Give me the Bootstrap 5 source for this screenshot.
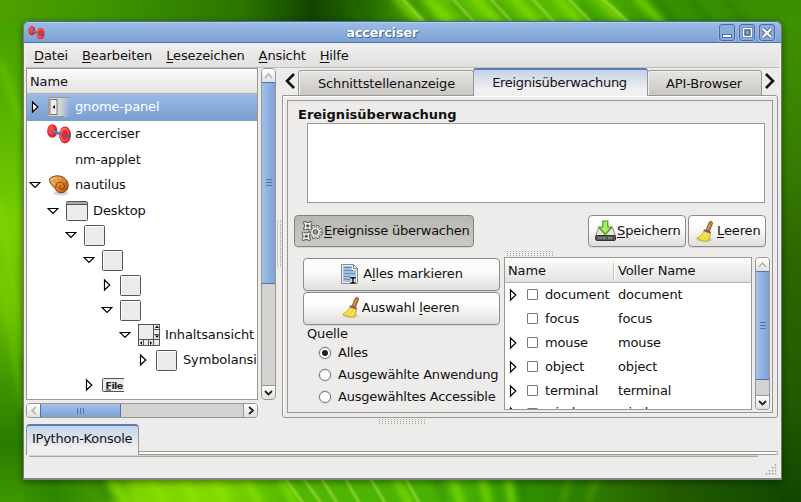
<!DOCTYPE html>
<html lang="de">
<head>
<meta charset="utf-8">
<title>accerciser</title>
<link rel="stylesheet" href="https://cdn.jsdelivr.net/npm/bootstrap@5.3.0/dist/css/bootstrap.min.css">
<style>
*{box-sizing:border-box}
body{width:801px;height:502px;overflow:hidden;background:#2f8400;font-family:"DejaVu Sans",sans-serif;font-size:13px;line-height:16px;color:#111;letter-spacing:-.13px}
svg{display:block;flex:none}
u{text-underline-offset:2px;text-decoration-thickness:1px}
.wallpaper{position:absolute;left:0;top:0}
.desktop{position:relative;padding:21px 19px 22px 23px}
.win{width:759px;height:459px;background:#edeceb;border-left:1px solid #777;border-right:1px solid #777;border-bottom:2px solid #87838a;border-radius:6px 6px 0 0;box-shadow:0 2px 6px 1px rgba(0,25,0,.42);overflow:hidden}
.titlebar{height:22px;margin:0 -1px;padding:1px 6px 0 4px;background:linear-gradient(#9dbce6,#7ba1d3);border:1px solid #46699b;border-bottom-color:#4b74b0;border-radius:6px 6px 0 0;box-shadow:inset 0 1px #b3cbed}
.titlebar .caption{font-weight:bold;color:#fff;letter-spacing:-.3px;text-shadow:1px 1px #456899,-1px 0 #5b80b4}
.wbtn{width:16px;height:17px;border:1px solid #4a6c9c;border-radius:3px;background:#8aaddc;box-shadow:0 0 0 1px #9ab8e0;display:flex;align-items:center;justify-content:center}
.menus{height:25px;padding:5px 0 0 8px;margin:0 2px;background:linear-gradient(#efeeed,#e2e1df);border-bottom:1px solid #bfbebb;gap:14px}
.main{height:356px;padding:0 3px 0 2px}
.tree{width:232px;height:332px;border:1px solid #9a9793;background:#fff;overflow:hidden}
.colhead{background:linear-gradient(#fcfcfc,#e3e2e0);border-bottom:1px solid #b5b2ae}
.tree .colhead{height:25px;padding:5px 0 0 3px}
.node{height:25px;white-space:nowrap;display:flex;align-items:center}
.node .exp{width:12px;margin-right:7px}
.node .ico{width:22px;margin-right:5px}
.h27{height:27px;padding-bottom:1px}.h26{height:26px}
.picked{background:linear-gradient(#9bbae5,#779fd1);color:#fff}
.lv0{padding-left:2px}.lv1{padding-left:20px}.lv2{padding-left:38px}.lv3{padding-left:56px}.lv4{padding-left:74px}.lv5{padding-left:92px}.lv6{padding-left:110px}
.lv2,.lv3,.lv4,.lv5,.lv6{padding-bottom:1px}
.vbar{width:15px;background:#d3d2d0;border:1px solid #9a9793;border-radius:4px;overflow:hidden;display:flex;flex-direction:column}
.hbar{height:15px;width:232px;margin-top:3px;background:#d3d2d0;border:1px solid #9a9793;border-radius:4px;overflow:hidden;display:flex}
.sbtn{background:linear-gradient(#fff,#e2e1df);flex:none;display:flex;align-items:center;justify-content:center}
.vbar .sbtn{height:13px}.hbar .sbtn{width:13px}
.vthumb{margin:0 -1px;border:1px solid #4b74b0;background:linear-gradient(90deg,#a3c1ea,#7ca2d6);flex:none}
.hthumb{margin:-1px 0;border:1px solid #4b74b0;background:linear-gradient(#a3c1ea,#7ca2d6);flex:none}
.vbar .sbtn:last-child{border-top:1px solid #9a9793;margin-top:auto;height:14px}
.hbar .sbtn:last-child{border-left:1px solid #9a9793;margin-left:auto;width:14px}
.vthumb,.hthumb{display:flex;align-items:center;justify-content:center}
.dots{background:conic-gradient(from 0deg at 1px 1px,transparent 0 75%,#a6a39f 0) 0 0/3px 2px}
.book{width:496px;margin-left:6px}
.tabs{height:28px;align-items:flex-end;margin-bottom:-1px;position:relative}
.gtab{text-align:center;border:1px solid #9a9793;border-radius:3px 3px 0 0;height:26px;padding:5px 0 0 1px;background:linear-gradient(#e6e5e3,#c9c7c4);box-shadow:inset 1px 1px #f2f1f0}
.gtab.on{height:28px;border-top:2px solid #5a7ead;border-bottom:0;padding:5px 2px 0 0;background:linear-gradient(#c3d3ea,#f0f0f0 75%);box-shadow:none;letter-spacing:-.3px}
.page{height:323px;border:1px solid #9a9793;border-radius:0 3px 3px 3px;background:#edeceb;box-shadow:inset 1px 1px #fff;padding:4px}
.inner{height:313px;border:1px solid #9a9793;overflow:hidden;padding:7px 0 0}
.heading{font-weight:bold;padding-left:10px;height:15px;line-height:14px;letter-spacing:0}
.logbox{width:458px;height:80px;border:1px solid #9a9793;background:#fff;margin-left:19px}
.gbtn{height:33px;border:1px solid #8f8c88;border-radius:4px;background:linear-gradient(#fff,#fbfbfa 40%,#e0dfdd);display:flex;align-items:center;white-space:nowrap;box-shadow:0 1px #d9d8d6}
.gbtn.down{background:linear-gradient(#b9b7b4,#cbc9c6);border-color:#85827e}
.marks .gbtn{padding-bottom:2px}
.opt{height:22px;display:flex;align-items:center;gap:7px;padding-left:16px;white-space:nowrap;letter-spacing:-.22px}
.rad{width:12px;height:12px;flex:none;border:1px solid #777;border-radius:50%;background:#fff;display:flex;align-items:center;justify-content:center;box-shadow:0 0 0 1px #dcdbd9}
.rad.on::after{content:"";width:6px;height:6px;border-radius:50%;background:#222}
.grid2{width:248px;height:153px;border:1px solid #9a9793;background:#fff;overflow:hidden}
.grid2 .colhead{height:25px;padding:5px 0 0 3px;display:flex}
.c1{width:105px;flex:none}
.c2{border-left:1px solid #c4c2bf;box-shadow:inset 1px 0 #fff;padding-left:4px;height:17px}
.ev{height:24px;display:flex;align-items:center;padding:0 0 1px 2px}
.ev:last-child{padding-bottom:4px}
.ev svg{width:12px;margin-right:8px}
.cbx{width:11px;height:11px;border:1px solid #777;background:#fff;margin-right:7px;border-radius:1px}
.ev .n1{width:73px}
.itab{width:113px;height:31px;border:1px solid #9a9793;border-top:2px solid #5a7ead;border-bottom:0;border-radius:4px 4px 0 0;background:linear-gradient(#c3d3ea,#f0f0f0 75%);padding:5px 0 0 5px;white-space:nowrap;letter-spacing:-.25px}
.rule{height:4px;border:1px solid #9a9793;border-left:0;background:#fff;flex:1;border-radius:0 2px 2px 0}
.line2{height:2px;background:#aaa8a4;margin:0 23px 0 5px;border-top:1px solid #d5d3d1}
</style>
<script src="https://cdn.jsdelivr.net/npm/bootstrap@5.3.0/dist/js/bootstrap.bundle.min.js"></script>
</head>
<body>
<svg class="wallpaper" width="801" height="502" viewBox="0 0 801 502">
 <defs>
  <linearGradient id="gt"><stop offset="0" stop-color="#4ea000"/><stop offset=".12" stop-color="#3f9600"/><stop offset=".3" stop-color="#2b7600"/><stop offset=".39" stop-color="#124400"/><stop offset=".46" stop-color="#256c00"/><stop offset=".55" stop-color="#60c000"/><stop offset=".72" stop-color="#55b800"/><stop offset=".83" stop-color="#349000"/><stop offset="1" stop-color="#3c8d02"/></linearGradient>
  <linearGradient id="gb"><stop offset="0" stop-color="#3f9800"/><stop offset=".07" stop-color="#2e8600"/><stop offset=".13" stop-color="#459a00"/><stop offset=".17" stop-color="#80d400"/><stop offset=".27" stop-color="#84d800"/><stop offset=".36" stop-color="#52b800"/><stop offset=".58" stop-color="#48b006"/><stop offset=".66" stop-color="#2f9000"/><stop offset=".76" stop-color="#2c7400"/><stop offset=".84" stop-color="#235c00"/><stop offset="1" stop-color="#0e4700"/></linearGradient>
  <linearGradient id="gl" x2="0" y2="1"><stop offset="0" stop-color="#46a000"/><stop offset=".2" stop-color="#5ab400"/><stop offset=".42" stop-color="#78cf00"/><stop offset=".6" stop-color="#69bd00"/><stop offset=".75" stop-color="#3d9600"/><stop offset=".88" stop-color="#2a7c00"/><stop offset="1" stop-color="#3d9800"/></linearGradient>
  <linearGradient id="gr" x2="0" y2="1"><stop offset="0" stop-color="#3e9202"/><stop offset=".3" stop-color="#377d02"/><stop offset=".5" stop-color="#2c6700"/><stop offset=".8" stop-color="#215a00"/><stop offset="1" stop-color="#0f4700"/></linearGradient>
  <filter id="b1" x="-20%" y="-50%" width="140%" height="200%"><feGaussianBlur stdDeviation="1"/></filter>
  <filter id="b4" x="-20%" y="-50%" width="140%" height="200%"><feGaussianBlur stdDeviation="3"/></filter>
 </defs>
 <rect width="801" height="250" fill="url(#gt)"/><rect y="250" width="801" height="252" fill="url(#gb)"/>
 <rect y="22" width="24" height="480" fill="url(#gl)"/><rect x="780" y="15" width="21" height="487" fill="url(#gr)"/>
 <g filter="url(#b4)" stroke-width="8" stroke="#8be800" opacity=".65"><path d="M395 -4l28 28M425 -4l26 28M472 -4l28 28M512 -4l26 28M555 -4l26 28M596 -4l28 28M635 -4l28 28M110 478l18 28M150 478l16 28M182 478l16 28M213 478l16 28M245 478l16 28M280 478l16 28M395 478l16 28M452 478l10 28M482 478l7 28M508 478l5 28"/></g>
 <g filter="url(#b4)" stroke-width="6" stroke="#236f00" opacity=".4"><path d="M345 0l20 24M375 0l20 24M412 0l22 24M452 0l22 24M492 0l22 24M578 0l22 24M655 0l22 24M690 0l22 24M725 0l22 24M95 478l14 24M435 478l10 24M520 478l4 24"/></g>
 <g filter="url(#b1)" stroke="#c4ee63" stroke-width="1.8" opacity=".75"><path d="M400 -4l26 28M450 -4l26 28M488 -4l26 28M530 -4l26 28M566 -4l27 28M600 -4l30 28M285 478l20 28M303 478l20 28M321 478l18 28M345 478l16 28M370 478l17 28M405 478l16 28"/></g>
 <path d="M0 200L24 360M0 270L24 410M0 60L24 130" stroke="#8ee000" stroke-width="5" opacity=".4" filter="url(#b4)"/>
 <path d="M598 476L588 502M570 476l-7 26" stroke="#66a800" stroke-width="5" opacity=".6" filter="url(#b4)"/>
</svg>
<svg width="0" height="0" style="position:absolute">
 <defs>
  <linearGradient id="brz" x2="1" y2="1"><stop offset="0" stop-color="#fbd08a"/><stop offset=".5" stop-color="#e38a2c"/><stop offset="1" stop-color="#a8500c"/></linearGradient>
  <symbol id="er" viewBox="0 0 12 14"><path d="M3.500 2v10L8.800 7z" fill="#fff" stroke="#000" stroke-width="1.200"/></symbol>
  <symbol id="ed" viewBox="0 0 12 14"><path d="M1 4.500h10L6 9.500z" fill="#fff" stroke="#000" stroke-width="1.200"/></symbol>
  <symbol id="dumb" viewBox="0 0 24 20"><ellipse cx="5.300" cy="7" rx="5.200" ry="6.800" fill="#e52527"/><ellipse cx="4.300" cy="6" rx="3" ry="4.500" fill="#ee5052"/><ellipse cx="18" cy="11" rx="6" ry="8.500" fill="#de2427"/><ellipse cx="17.300" cy="10.500" rx="4.800" ry="7" fill="#f1686a"/><ellipse cx="18" cy="11" rx="3.600" ry="5" fill="#e12e31"/><path d="M5 7.500l9 2.200M19 11.200l4.500 1" stroke="#42659d" stroke-width="2.600"/><path d="M6 7.300l8 2" stroke="#8badda" stroke-width=".8"/></symbol>
  <symbol id="box" viewBox="0 0 22 22"><rect x=".5" y="1.500" width="20" height="20" rx="1" fill="#ebebeb" stroke="#555" /><path d="M1.500 21V2.500H20" fill="none" stroke="#fff"/></symbol>
  <symbol id="broom" viewBox="0 0 24 24"><ellipse cx="12" cy="21" rx="9" ry="1.800" fill="#000" opacity=".13"/><path d="M16.500 2c1.500-1.800 4-1.200 3.700 1.200l-3.500 9-3.700-1.400z" fill="#b9782b" stroke="#7d4a13" stroke-width=".8"/><path d="M18 3l-3 7" stroke="#e2ab63" stroke-width="1"/><path d="M11 11c-1.600 4-4.500 6.500-8 8.300 3.300 3 8 3.700 13 3.200 1-3 2-6 2-9z" fill="#eed42f" stroke="#b79a08" stroke-width=".7"/><path d="M5.500 19.500l6-6M9 21l3.500-7M12.500 21.500l3-7" stroke="#fbf094"/><path d="M10.800 10.500l7.400 2.800" stroke="#80508c" stroke-width="2"/></symbol>
  <symbol id="cog" viewBox="0 0 10 10"><path d="M.7.700h2.600v.8h3.400V.7h2.600v2.600h-.8v3.400h.8v2.600H6.700v-.8H3.300v.8H.7V6.700h.8V3.300H.7z" fill="#eeeeec" stroke="#555753" stroke-width="1"/><circle cx="5" cy="5" r="1.700" fill="#555753"/></symbol>
 </defs>
</svg>
<div class="desktop">
<div class="win">
 <div class="titlebar d-flex align-items-center">
  <svg width="17" height="13" viewBox="0 0 24 19"><use href="#dumb" width="24" height="20"/></svg>
  <span class="caption flex-fill text-center">accerciser</span>
  <div class="d-flex" style="gap:4px">
   <span class="wbtn"><svg width="10" height="11"><rect x=".5" y="7.500" width="9" height="3" fill="#fff" stroke="#4a6c9c"/></svg></span>
   <span class="wbtn"><svg width="11" height="11"><rect x="1.500" y="1.500" width="8" height="8" fill="#6b90c4" stroke="#4a6c9c" stroke-width="3"/><rect x="1.500" y="1.500" width="8" height="8" fill="none" stroke="#fff" stroke-width="1.500"/><rect x="3.500" y="3.500" width="4" height="4" fill="#8aaddc" stroke="#4a6c9c"/></svg></span>
   <span class="wbtn"><svg width="12" height="12"><path d="M2 2l8 8M10 2l-8 8" stroke="#4a6c9c" stroke-width="4.200"/><path d="M2 2l8 8M10 2l-8 8" stroke="#fff" stroke-width="2.300"/></svg></span>
  </div>
 </div>
 <div class="menus d-flex"><span><u>D</u>atei</span><span><u>B</u>earbeiten</span><span><u>L</u>esezeichen</span><span><u>A</u>nsicht</span><span><u>H</u>ilfe</span></div>
 <div class="main d-flex">
  <div>
   <div class="tree">
    <div class="colhead">Name</div>
    <div class="node h27 lv0 picked"><svg class="exp" height="14"><use href="#er"/></svg><svg class="ico" width="22" height="20"><defs><linearGradient id="fade"><stop offset=".55" stop-color="#d3d7cf"/><stop offset="1" stop-color="#d3d7cf" stop-opacity="0"/></linearGradient></defs><rect width="22" height="20" fill="url(#fade)"/><path d="M22 .5H.5v19H16" fill="none" stroke="#888a85" stroke-width=".8"/><rect x="2" y="2.500" width="7" height="15" fill="#edeeec" stroke="#777"/><path d="M7 8v4L4.500 10z"/></svg><span>gnome-panel</span></div>
    <div class="node h26 lv0"><span class="exp"></span><svg class="ico overflow-visible" height="20"><use href="#dumb" x="-1" y="0" width="24" height="20"/></svg><span>accerciser</span></div>
    <div class="node lv0"><span class="exp"></span><span class="ico"></span><span>nm-applet</span></div>
    <div class="node h26 lv0"><svg class="exp" height="14"><use href="#ed"/></svg><svg class="ico" height="22"><ellipse cx="13" cy="19.500" rx="8" ry="2" fill="#000" opacity=".15"/><path d="M1.500 5C5 1 13 .8 17 4.500c4.500 4 4.300 11-1 13.700-4 1.600-8 0-8.500-3.700C4.500 12.500 1.500 9 1.500 5z" fill="url(#brz)" stroke="#74390c"/><path d="M8 14c-1-4 3-7.500 6.500-5s2 6.500-1 6.300-2.700-3.300-.5-3.500" fill="none" stroke="#7d3e0c" stroke-width="1"/><path d="M9.500 3l1.500 4M15 3.500l-1 3.500M19.500 8.500l-3 1M5 6l4 3" fill="none" stroke="#a05a1c" stroke-width=".5"/></svg><span>nautilus</span></div>
    <div class="node lv1"><svg class="exp" height="14"><use href="#ed"/></svg><svg class="ico" height="20"><rect x=".5" y=".5" width="21" height="19" rx="1" fill="#ebebeb" stroke="#555"/><path d="M1 1h20v2H1z" fill="#aaa"/><path d="M0 3.500h22" stroke="#555"/></svg><span>Desktop</span></div>
    <div class="node lv2"><svg class="exp" height="14"><use href="#ed"/></svg><svg class="ico" height="22"><use href="#box"/></svg></div>
    <div class="node lv3"><svg class="exp" height="14"><use href="#ed"/></svg><svg class="ico" height="22"><use href="#box"/></svg></div>
    <div class="node lv4"><svg class="exp" height="14"><use href="#er"/></svg><svg class="ico" height="22"><use href="#box"/></svg></div>
    <div class="node lv4"><svg class="exp" height="14"><use href="#ed"/></svg><svg class="ico" height="22"><use href="#box"/></svg></div>
    <div class="node lv5"><svg class="exp" height="14"><use href="#ed"/></svg><svg class="ico" height="22"><rect x=".5" y=".5" width="21" height="21" fill="#ebebeb" stroke="#555"/><path d="M15.500 0v22M0 15.500h22M16 5.500h6M16 10.500h6M5.500 16v6M10.500 16v6" stroke="#555"/><path d="M19 1.500l2 2.500h-4zM19 14l2-2.500h-4zM2 19l2-2v4zM14 19l-2-2v4z"/></svg><span>Inhaltsansicht</span></div>
    <div class="node lv6"><svg class="exp" height="14"><use href="#er"/></svg><svg class="ico" height="22"><use href="#box"/></svg><span>Symbolansicht</span></div>
    <div class="node lv3"><svg class="exp" height="14"><use href="#er"/></svg><svg class="ico" height="14"><path d="M22 .5H1.500q-1 0-1 1v11q0 1 1 1H22" fill="#ebebeb" stroke="#555"/><text x="3.500" y="10.500" font-size="9.500" font-weight="bold" textLength="17.500" fill="#222">File</text><path d="M4 12h5" stroke="#222"/></svg></div>
   </div>
   <div class="hbar">
    <span class="sbtn"><svg width="8" height="9"><path d="M6 1L2 4.500 6 8" fill="none" stroke="#aaa" stroke-width="1.500"/></svg></span>
    <span class="hthumb" style="width:81px"><svg width="8" height="6"><path d="M.5 0v6M3.500 0v6M6.500 0v6" stroke="#4b74b0"/></svg></span>
    <span class="sbtn"><svg width="8" height="9"><path d="M2 1l4 3.500L2 8" fill="none" stroke="#222" stroke-width="1.800"/></svg></span>
   </div>
  </div>
  <div class="vbar" style="height:332px;margin-left:3px">
   <span class="sbtn"><svg width="9" height="8"><path d="M1 6l3.500-4L8 6" fill="none" stroke="#aaa" stroke-width="1.200"/></svg></span>
   <span class="vthumb" style="height:202px"><svg width="6" height="8"><path d="M0 .5h6M0 3.500h6M0 6.500h6" stroke="#4b74b0"/></svg></span>
   <span class="sbtn"><svg width="9" height="8"><path d="M1 2l3.500 3.500L8 2" fill="none" stroke="#222" stroke-width="1.800"/></svg></span>
  </div>
  <div style="width:6px;padding:152px 0 0 1px;margin-right:-6px"><div class="dots" style="width:5px;height:47px"></div></div>
  <div class="book">
   <div class="tabs d-flex">
    <svg width="16" height="28"><path d="M12 6L5 13l7 7" fill="none" stroke="#111" stroke-width="2.600"/></svg>
    <div class="gtab" style="width:176px">Schnittstellenanzeige</div>
    <div class="gtab on" style="width:175px;margin-left:-1px">Ereignisüberwachung</div>
    <div class="gtab" style="width:115px;margin-left:-1px;padding-right:2px">API-Browser</div>
    <svg width="16" height="28"><path d="M4 6l7 7-7 7" fill="none" stroke="#111" stroke-width="2.600"/></svg>
   </div>
   <div class="page"><div class="inner">
    <div class="heading">Ereignisüberwachung</div>
    <div class="logbox"></div>
    <div class="d-flex" style="padding:12px 6px 0 6px">
     <div class="gbtn down" style="width:180px;height:32px;padding-left:6px"><svg width="22" height="22"><g fill="none"><circle cx="14.500" cy="12" r="5.300" stroke="#555753" stroke-width="4" stroke-dasharray="2.800 1.362"/><circle cx="14.500" cy="12" r="5.200" stroke="#e4e4e2" stroke-width="2.600" stroke-dasharray="1.600 2.484" stroke-dashoffset="-.6"/></g><circle cx="14.500" cy="12" r="4.500" fill="#dcddda"/><circle cx="14.500" cy="12" r="2.200" fill="#999" stroke="#555753"/><use href="#cog" x="2" y="1" width="9.500" height="9.500"/><use href="#cog" x=".5" y="11.500" width="9.500" height="9.500"/></svg><span style="margin-left:1px;letter-spacing:-.25px"><u>E</u>reignisse überwachen</span></div>
     <div class="gbtn ms-auto" style="width:98px;height:32px;padding-left:6px"><svg width="22" height="22"><path d="M3.500 8h14l3 8H.7z" fill="#e6e6e3" stroke="#888a85"/><rect x=".6" y="15.500" width="20" height="5" rx="1.500" fill="#555753" stroke="#2e3436"/><path d="M3 18h8M13 18h4" stroke="#ccc" stroke-dasharray="1.500 1"/><path d="M7.800 1h5v6h4l-6.500 7.500L3.800 7h4z" fill="#a9e96c" stroke="#4e9a06" stroke-width="1.200"/></svg><span><u>S</u>peichern</span></div>
     <div class="gbtn" style="width:78px;height:32px;margin-left:2px;padding-left:5px"><svg width="22" height="23"><use href="#broom"/></svg><span style="margin-left:1px"><u>L</u>eeren</span></div>
    </div>
    <div class="d-flex" style="padding-left:15px">
     <div class="marks" style="width:197px;padding-top:11px">
      <div class="gbtn justify-content-center"><svg width="20" height="22"><path d="M1.500 1.500h12l4 4v15h-16z" fill="#eef2f7" stroke="#888a85"/><path d="M3 3h9v4h4v12H3z" fill="#a4bfdd"/><path d="M4 4.500h7M4 7.500h9M4 10.500h11M4 13.500h6M4 16.500h6" stroke="#6d8fb8"/><path d="M13.500 1.500v4h4z" fill="#fff" stroke="#888"/><path d="M11 15h4M11 20h4M13 15v5" stroke="#fff" stroke-width="3"/><path d="M10.500 14.700h5M10.500 20h5M13 14.500v6" stroke="#000" stroke-width="1.400"/></svg><span style="margin-left:3px">A<u>l</u>les markieren</span></div>
      <div class="gbtn justify-content-center" style="margin-top:1px;padding-right:4px"><svg width="22" height="23"><use href="#broom"/></svg><span>Auswahl <u>l</u>eeren</span></div>
      <div style="padding:1px 0 0 4px;height:17px">Quelle</div>
      <div class="opt"><span class="rad on"></span>Alles</div>
      <div class="opt"><span class="rad"></span>Ausgewählte Anwendung</div>
      <div class="opt"><span class="rad"></span>Ausgewähltes Accessible</div>
     </div>
     <div style="margin-left:4px">
      <div class="dots" style="width:47px;height:5px;margin:4px 0 1px 3px"></div>
      <div class="d-flex">
       <div class="grid2">
        <div class="colhead"><span class="c1">Name</span><span class="c2">Voller Name</span></div>
        <div class="ev"><svg height="14"><use href="#er"/></svg><span class="cbx"></span><span class="n1">document</span><span>document</span></div>
        <div class="ev"><svg height="14"></svg><span class="cbx"></span><span class="n1">focus</span><span>focus</span></div>
        <div class="ev"><svg height="14"><use href="#er"/></svg><span class="cbx"></span><span class="n1">mouse</span><span>mouse</span></div>
        <div class="ev"><svg height="14"><use href="#er"/></svg><span class="cbx"></span><span class="n1">object</span><span>object</span></div>
        <div class="ev"><svg height="14"><use href="#er"/></svg><span class="cbx"></span><span class="n1">terminal</span><span>terminal</span></div>
        <div class="ev"><svg height="14"><use href="#er"/></svg><span class="cbx"></span><span class="n1">window</span><span>window</span></div>
       </div>
       <div class="vbar" style="height:153px;margin-left:3px">
        <span class="sbtn"><svg width="9" height="8"><path d="M1 6l3.500-4L8 6" fill="none" stroke="#aaa" stroke-width="1.200"/></svg></span>
        <span class="vthumb" style="height:109px"><svg width="6" height="8"><path d="M0 .5h6M0 3.500h6M0 6.500h6" stroke="#4b74b0"/></svg></span>
        <span class="sbtn"><svg width="9" height="8"><path d="M1 2l3.500 3.500L8 2" fill="none" stroke="#222" stroke-width="1.800"/></svg></span>
       </div>
      </div>
     </div>
    </div>
   </div></div>
   <div class="dots" style="width:47px;height:5px;margin:1px 0 0 97px"></div>
  </div>
 </div>
 <div class="d-flex align-items-end" style="padding:0 3px 0 2px"><div class="itab">IPython-Konsole</div><div class="rule"></div></div>
 <div class="line2"></div>
 <div class="d-flex justify-content-end" style="padding:7px 4px 0"><svg width="12" height="12"><path d="M10.500 0v12M7.500 3v9M4.500 6v6M1.500 9v3" stroke="#a5a29e" stroke-width="1.500" stroke-dasharray="1.500 1.500"/></svg></div>
</div>
</div>
</body>
</html>
